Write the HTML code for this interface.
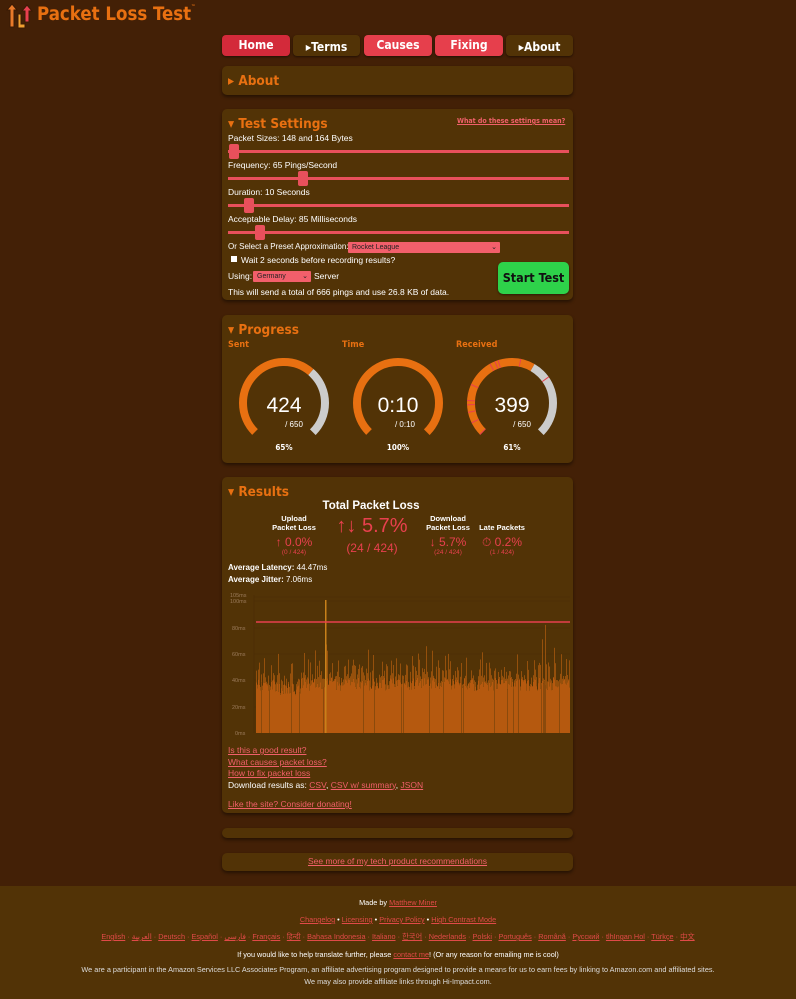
<!DOCTYPE html>
<html><head><meta charset="utf-8"><style>
*{box-sizing:border-box;margin:0;padding:0}
body{width:796px;height:999px;background:#432006;font-family:"Liberation Sans",sans-serif;position:relative;overflow:hidden;color:#fff}
.a{position:absolute;white-space:nowrap}
.h{font-family:"DejaVu Sans Condensed","Liberation Sans Narrow","Liberation Sans",sans-serif;font-weight:bold}
.panel{position:absolute;left:222px;width:351px;background:#523306;border-radius:5px;box-shadow:0 2px 3px rgba(0,0,0,.45)}
.btn{position:absolute;top:35px;height:21px;border-radius:4px;font-size:12px;text-align:center;line-height:21px;color:#fff;box-shadow:0 1px 2px rgba(0,0,0,.5)}
.ptitle{position:absolute;left:6px;color:#e87011;font-size:13.5px;white-space:nowrap}
.lbl{position:absolute;left:6px;font-size:8.5px;color:#fff;white-space:nowrap}
.track{position:absolute;left:6px;width:341px;height:3px;background:#e8505c}
.thumb{position:absolute;width:10px;height:15px;background:#e8505c;border-radius:2px}
a,.lk{color:#f0606a;text-decoration:underline}
.sel{position:absolute;background:#f25f6b;font-size:7px;color:#222;padding-left:4px;line-height:11px;height:11px;border-radius:1px}
.c{text-align:center}
.red{color:#e8404e}
.foot{position:absolute;left:0;top:886px;width:796px;height:113px;background:#523306;font-size:7.3px;color:#fff;text-align:center}
.foot a{color:#e04a48}
</style></head><body>

<svg class="a" style="left:6px;top:2px" width="30" height="28" viewBox="0 0 30 28">
<path d="M4 25V8H1L6 2l5 6H8v17z" fill="#e87a2a" stroke="#3a1a04" stroke-width="1"/>
<path d="M19 20V9h-3l5-6 5 6h-3v11z" fill="#e84050" stroke="#3a1a04" stroke-width="1"/>
<path d="M12 12h3v10h4v4h-7z" fill="#f0a030" stroke="#3a1a04" stroke-width="1"/>
</svg>
<div class="a h" style="left:37px;top:4px;font-size:18.5px;color:#e87011">Packet Loss Test<span style="font-size:5px;vertical-align:top">™</span></div>

<div class="btn h" style="left:222px;width:68px;background:#d32a3a">Home</div>
<div class="btn h" style="left:293px;width:67px;background:#523306;line-height:24px">▸Terms</div>
<div class="btn h" style="left:364px;width:68px;background:#e63f4c">Causes</div>
<div class="btn h" style="left:435px;width:68px;background:#e63f4c">Fixing</div>
<div class="btn h" style="left:506px;width:67px;background:#523306;line-height:24px">▸About</div>

<div class="panel" style="top:66px;height:29px"><div class="ptitle h" style="top:7px">▸ About</div></div>

<div class="panel" style="top:109px;height:191px">
<div class="ptitle h" style="top:7px">▾ Test Settings</div>
<div class="a h lk" style="left:235px;top:8px;font-size:7px">What do these settings mean?</div>
<div class="lbl" style="top:24px">Packet Sizes: 148 and 164 Bytes</div>
<div class="track" style="top:41px"></div><div class="thumb" style="left:7px;top:35px"></div>
<div class="lbl" style="top:51px">Frequency: 65 Pings/Second</div>
<div class="track" style="top:68px"></div><div class="thumb" style="left:76px;top:62px"></div>
<div class="lbl" style="top:78px">Duration: 10 Seconds</div>
<div class="track" style="top:95px"></div><div class="thumb" style="left:22px;top:89px"></div>
<div class="lbl" style="top:105px">Acceptable Delay: 85 Milliseconds</div>
<div class="track" style="top:122px"></div><div class="thumb" style="left:33px;top:116px"></div>
<div class="lbl" style="top:133px;font-size:8px">Or Select a Preset Approximation:</div>
<div class="sel" style="left:126px;top:133px;width:152px">Rocket League<span style="float:right;padding-right:3px">⌄</span></div>
<div class="a" style="left:9px;top:147px;width:6px;height:6px;background:#fff"></div>
<div class="lbl" style="left:19px;top:146px">Wait 2 seconds before recording results?</div>
<div class="lbl" style="top:162px">Using:</div>
<div class="sel" style="left:31px;top:162px;width:58px">Germany<span style="float:right;padding-right:3px">⌄</span></div>
<div class="lbl" style="left:92px;top:162px">Server</div>
<div class="lbl" style="top:178px">This will send a total of 666 pings and use 26.8 KB of data.</div>
<div class="a h" style="left:276px;top:153px;width:71px;height:32px;background:#2ed24a;border-radius:5px;color:#111;font-size:12.5px;text-align:center;line-height:32px;box-shadow:0 1px 2px rgba(0,0,0,.5)">Start Test</div>
</div>

<div class="panel" style="top:315px;height:148px">
<div class="ptitle h" style="top:7px">▾ Progress</div>
<div class="a h" style="left:6px;top:25px;font-size:9px;color:#e87011">Sent</div>
<div class="a h" style="left:120px;top:25px;font-size:9px;color:#e87011">Time</div>
<div class="a h" style="left:234px;top:25px;font-size:9px;color:#e87011">Received</div>
</div>
<svg class="a" style="left:222px;top:315px" width="351" height="148">
<g fill="none" stroke-width="8">
<g transform="translate(62,88) rotate(135)">
<circle r="41" stroke="#ccc" stroke-dasharray="0 125.6 67.6 300"/>
<circle r="41" stroke="#e87011" stroke-dasharray="125.6 300"/>
</g>
<g transform="translate(176,88) rotate(135)">
<circle r="41" stroke="#e87011" stroke-dasharray="193.2 300"/>
</g>
<g transform="translate(290,88) rotate(135)">
<circle r="41" stroke="#ccc" stroke-dasharray="0 117.8 75.4 300"/>
<circle r="41" stroke="#e87011" stroke-dasharray="117.8 300"/>
<circle r="41" stroke="#e8404e" stroke-dasharray="1 12 1 9 1 6 1 3 1 14 1 25 1 4 1 2 1 20 1 30 1 300"/>
</g>
</g>
<g fill="#fff" font-family="Liberation Sans,sans-serif" text-anchor="middle">
<text x="62" y="97" font-size="21">424</text><text x="72" y="112" font-size="8">/ 650</text>
<text x="176" y="97" font-size="21">0:10</text><text x="183" y="112" font-size="8">/ 0:10</text>
<text x="290" y="97" font-size="21">399</text><text x="300" y="112" font-size="8">/ 650</text>
<g font-weight="bold" font-size="8" font-family="DejaVu Sans Condensed,sans-serif">
<text x="62" y="135">65%</text><text x="176" y="135">100%</text><text x="290" y="135">61%</text></g>
</g>
</svg>

<div class="panel" style="top:477px;height:336px">
<div class="ptitle h" style="top:7px">▾ Results</div>
<div class="a c" style="left:80px;top:23px;width:138px;font-size:11.5px;font-weight:bold">Total Packet Loss</div>
<div class="a c" style="left:36px;top:37px;width:72px;font-size:7.5px;font-weight:bold;line-height:9px">Upload<br>Packet Loss</div>
<div class="a c red" style="left:36px;top:58px;width:72px;font-size:12px">↑ 0.0%</div>
<div class="a c red" style="left:36px;top:72px;width:72px;font-size:6.5px">(0 / 424)</div>
<div class="a c red" style="left:100px;top:38px;width:100px;font-size:20px">↑↓ 5.7%</div>
<div class="a c red" style="left:100px;top:64px;width:100px;font-size:12px">(24 / 424)</div>
<div class="a c" style="left:190px;top:37px;width:72px;font-size:7.5px;font-weight:bold;line-height:9px">Download<br>Packet Loss</div>
<div class="a c red" style="left:190px;top:58px;width:72px;font-size:12px">↓ 5.7%</div>
<div class="a c red" style="left:190px;top:72px;width:72px;font-size:6.5px">(24 / 424)</div>
<div class="a c" style="left:246px;top:46px;width:68px;font-size:7.5px;font-weight:bold">Late Packets</div>
<div class="a c red" style="left:246px;top:58px;width:68px;font-size:12px">⏱ 0.2%</div>
<div class="a c red" style="left:246px;top:72px;width:68px;font-size:6.5px">(1 / 424)</div>
<div class="a" style="left:6px;top:86px;font-size:8px"><b>Average Latency:</b> 44.47ms</div>
<div class="a" style="left:6px;top:98px;font-size:8px"><b>Average Jitter:</b> 7.06ms</div>
<div class="a" style="left:6px;top:268px;font-size:8.5px;line-height:11.5px">
<a>Is this a good result?</a><br><a>What causes packet loss?</a><br><a>How to fix packet loss</a><br>
Download results as: <a>CSV</a>, <a>CSV w/ summary</a>, <a>JSON</a><br><div style="height:8px"></div><a>Like the site? Consider donating!</a></div>
</div>
<svg id="ch" class="a" style="left:222px;top:590px" width="351" height="150" font-family="Liberation Sans,sans-serif" font-size="5.5" fill="#9a7a5a">
<g stroke="#4a2c05" stroke-width="0.6">
<line x1="32" x2="348" y1="7" y2="7"/><line x1="32" x2="348" y1="11" y2="11"/><line x1="32" x2="348" y1="38" y2="38"/><line x1="32" x2="348" y1="64" y2="64"/><line x1="32" x2="348" y1="90" y2="90"/><line x1="32" x2="348" y1="117" y2="117"/><line x1="32" x2="32" y1="5" y2="143"/>
</g>
<text x="8" y="7">105ms</text><text x="8" y="13">100ms</text><text x="10" y="40">80ms</text><text x="10" y="66">60ms</text><text x="10" y="92">40ms</text><text x="10" y="119">20ms</text><text x="13" y="145">0ms</text>
<g id="bars"></g>
<line x1="34" x2="348" y1="32" y2="32" stroke="#e8404e" stroke-width="1.5"/>
</svg>
<script>
(function(){var g=document.getElementById('bars'),s=11,h='';function r(){s=(s*9301+49297)%233280;return s/233280;}
var x=34,base=143,k=1.32;for(var i=0;i<314;i++){var lo=32+r()*10;if(i>18&&i<45)lo-=4;var v=lo+r()*8+(r()<0.35?r()*15:0);if(r()<0.06)v+=r()*25;
var yt=base-v*k,yl=base-lo*k;
h+='<rect x="'+x+'" y="'+yt.toFixed(1)+'" width="1" height="'+(yl-yt).toFixed(1)+'" fill="#95500c"/>';
h+='<rect x="'+x+'" y="'+yl.toFixed(1)+'" width="1" height="'+(lo*k).toFixed(1)+'" fill="'+(r()<0.06?'#8a4a0c':'#b5590f')+'"/>';x+=1;}
h+='<rect x="103" y="10" width="1.5" height="133" fill="#c8801a"/>';g.innerHTML=h;})();
</script>

<div class="panel" style="top:828px;height:10px"></div>
<div class="panel c" style="top:853px;height:18px;font-size:8.5px;line-height:17px"><a>See more of my tech product recommendations</a></div>

<div class="foot">
<div class="a" style="top:12px;width:796px">Made by <a>Matthew Miner</a></div>
<div class="a" style="top:29px;width:796px"><a>Changelog</a> • <a>Licensing</a> • <a>Privacy Policy</a> • <a>High Contrast Mode</a></div>
<div class="a" style="top:46px;width:796px;color:#e04a48"><a>English</a> · <a>العربية</a> · <a>Deutsch</a> · <a>Español</a> · <a>فارسی</a> · <a>Français</a> · <a>हिन्दी</a> · <a>Bahasa Indonesia</a> · <a>Italiano</a> · <a>한국어</a> · <a>Nederlands</a> · <a>Polski</a> · <a>Português</a> · <a>Română</a> · <a>Русский</a> · <a>tlhIngan Hol</a> · <a>Türkçe</a> · <a>中文</a></div>
<div class="a" style="top:64px;width:796px">If you would like to help translate further, please <a>contact me</a>! (Or any reason for emailing me is cool)</div>
<div class="a" style="top:79px;width:796px;color:#ddd">We are a participant in the Amazon Services LLC Associates Program, an affiliate advertising program designed to provide a means for us to earn fees by linking to Amazon.com and affiliated sites.</div>
<div class="a" style="top:91px;width:796px;color:#ddd">We may also provide affiliate links through Hi-Impact.com.</div>
</div>
</body></html>
